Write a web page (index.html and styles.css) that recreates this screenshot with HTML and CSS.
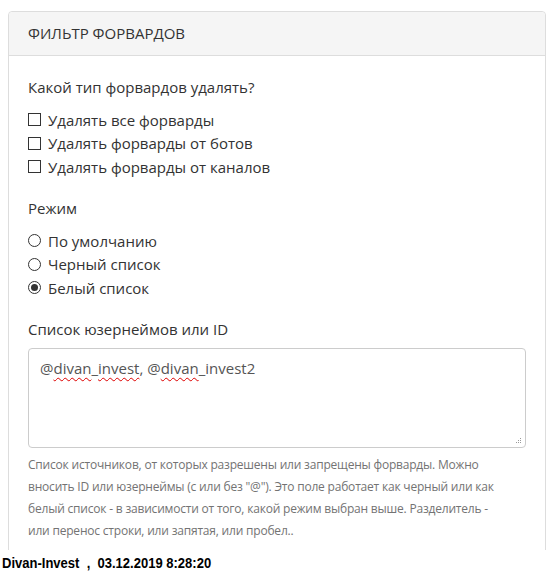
FILE: index.html
```html
<!DOCTYPE html>
<html>
<head>
    <title>Фильтр форвардов</title>
    <link rel="stylesheet" href="styles.css">
</head>
<body>
    <div class="viewport">
        <div class="panel">
            <div class="panel-heading">ФИЛЬТР ФОРВАРДОВ</div>
            <div class="panel-body">
                <div class="group-label">Какой тип форвардов удалять?</div>
                <div class="options">
                    <label class="option"><input type="checkbox" class="check"> Удалять все форварды</label>
                    <label class="option"><input type="checkbox" class="check"> Удалять форварды от ботов</label>
                    <label class="option"><input type="checkbox" class="check"> Удалять форварды от каналов</label>
                </div>

                <div class="group-label">Режим</div>
                <div class="options">
                    <label class="option"><input type="radio" name="mode" class="radio"> По умолчанию</label>
                    <label class="option"><input type="radio" name="mode" class="radio"> Черный список</label>
                    <label class="option"><input type="radio" name="mode" class="radio" checked> Белый список</label>
                </div>

                <div class="group-label field-label">Список юзернеймов или ID</div>
                <div class="textarea">
                    @<span class="typo">divan</span>_<span class="typo">invest</span>, @<span class="typo">divan</span>_invest2
                    <svg class="grip" width="7" height="7" viewBox="0 0 7 7">
                        <rect x="5" y="1" width="1" height="1" fill="#999"/>
                        <rect x="3" y="3" width="1" height="1" fill="#999"/>
                        <rect x="5" y="3" width="1" height="1" fill="#999"/>
                        <rect x="1" y="5" width="1" height="1" fill="#999"/>
                        <rect x="3" y="5" width="1" height="1" fill="#999"/>
                        <rect x="5" y="5" width="1" height="1" fill="#999"/>
                    </svg>
                </div>
                <p class="help">Список источников, от которых разрешены или запрещены форварды. Можно вносить ID или юзернеймы (с или без "@"). Это поле работает как черный или как белый список - в зависимости от того, какой режим выбран выше. Разделитель - или перенос строки, или запятая, или пробел..</p>
            </div>
        </div>
    </div>
    <div class="footer"><span class="stamp">Divan-Invest &nbsp;, &nbsp;03.12.2019 8:28:20</span></div>
</body>
</html>
```

FILE: styles.css
```css
body {
    margin: 0;
    background: #fff;
    font-family: "Open Sans", "Noto Sans", sans-serif;
    color: #333;
}

.viewport {
    height: 550px;
    overflow: hidden;
    padding: 11px 6px 0 8px;
    box-sizing: border-box;
}

.panel {
    border: 1px solid #ddd;
    border-radius: 4px;
    background: #fff;
    height: 600px;
}

.panel-heading {
    background: #f5f5f5;
    border-bottom: 1px solid #ddd;
    border-radius: 4px 4px 0 0;
    padding: 0 19px;
    height: 43px;
    line-height: 43px;
    font-size: 15px;
}

.panel-body {
    padding: 20px 19px 0 19px;
}

.group-label {
    font-size: 15px;
    line-height: 22px;
    margin-bottom: 10px;
}

.group-label.field-label {
    margin-bottom: 8px;
}

.options {
    margin-bottom: 18.5px;
}

.option {
    display: flex;
    align-items: center;
    height: 23.5px;
    font-size: 15px;
    gap: 7px;
}

.check,
.radio {
    appearance: none;
    -webkit-appearance: none;
    margin: 0;
    width: 13px;
    height: 13px;
    border: 1px solid #333;
    background: #fff;
    flex: none;
}

.radio {
    border-radius: 50%;
    position: relative;
}

.radio:checked::after {
    content: "";
    position: absolute;
    left: 2px;
    top: 2px;
    width: 7px;
    height: 7px;
    border-radius: 50%;
    background: #333;
}

.textarea {
    position: relative;
    height: 100px;
    box-sizing: border-box;
    border: 1px solid #ccc;
    border-radius: 4px;
    padding: 8px 11px;
    font-size: 15px;
    line-height: 22px;
    color: #555;
}

.typo {
    text-decoration: underline wavy #d00;
    text-decoration-thickness: 1px;
    text-underline-offset: 3px;
}

.grip {
    position: absolute;
    right: 3px;
    bottom: 3px;
}

.help {
    margin: 6px 0 0 0;
    max-width: 475px;
    font-size: 12px;
    letter-spacing: -0.2px;
    line-height: 22px;
    color: #737373;
}

.footer {
    padding: 5px 2px 0 2px;
    font-family: "Liberation Sans", sans-serif;
    font-weight: bold;
    font-size: 14px;
    color: #000;
}

.stamp {
    display: inline-block;
    transform: scaleX(0.93);
    transform-origin: left center;
    white-space: nowrap;
}
```
